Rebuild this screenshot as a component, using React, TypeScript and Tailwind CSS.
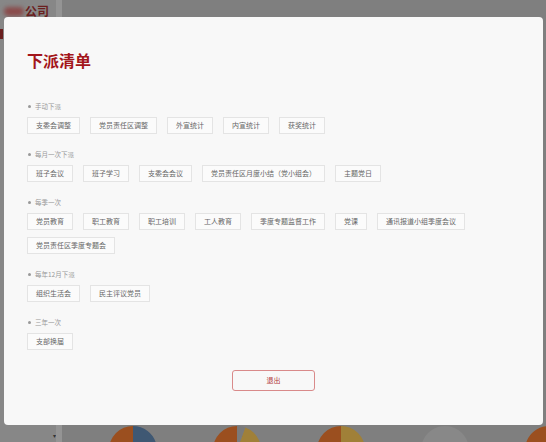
const sections = [
  { label: '手动下派', tags: ['支委会调整', '党员责任区调整', '外宣统计', '内宣统计', '获奖统计'] },
  {
    label: '每月一次下派',
    tags: ['班子会议', '班子学习', '支委会会议', '党员责任区月度小结（党小组会）', '主题党日'],
  },
  {
    label: '每季一次',
    tags: [
      '党员教育',
      '职工教育',
      '职工培训',
      '工人教育',
      '季度专题监督工作',
      '党课',
      '通讯报道小组季度会议',
      '党员责任区季度专题会',
    ],
  },
  { label: '每年12月下派', tags: ['组织生活会', '民主评议党员'] },
  { label: '三年一次', tags: ['支部换届'] },
]

type Slice = { color: string; from: number; to: number }

const pies: Slice[][] = [
  [
    { color: '#9b4f1f', from: 180, to: 360 },
    { color: '#3f5873', from: 0, to: 150 },
    { color: '#3c7a3c', from: 150, to: 180 },
  ],
  [
    { color: '#9b4f1f', from: 180, to: 360 },
    { color: '#a08038', from: 20, to: 110 },
    { color: '#3c7a3c', from: 110, to: 140 },
    { color: '#6c6c6c', from: 140, to: 180 },
    { color: '#7a7a7a', from: 0, to: 20 },
  ],
  [
    { color: '#9b4f1f', from: 180, to: 360 },
    { color: '#a08038', from: 0, to: 90 },
    { color: '#6c6c6c', from: 90, to: 180 },
  ],
  [{ color: '#888888', from: 0, to: 360 }],
  [{ color: '#9b4f1f', from: 0, to: 360 }],
]

function arc(cx: number, cy: number, r: number, from: number, to: number) {
  // angles in degrees, 0 = up, clockwise
  if (to - from >= 360) {
    return `M ${cx} ${cy - r} A ${r} ${r} 0 1 1 ${cx - 0.01} ${cy - r} Z`
  }
  const p = (a: number) => {
    const rad = ((a - 90) * Math.PI) / 180
    return [cx + r * Math.cos(rad), cy + r * Math.sin(rad)]
  }
  const [x1, y1] = p(from)
  const [x2, y2] = p(to)
  const large = to - from > 180 ? 1 : 0
  return `M ${cx} ${cy} L ${x1} ${y1} A ${r} ${r} 0 ${large} 1 ${x2} ${y2} Z`
}

function Pie({ slices }: { slices: Slice[] }) {
  return (
    <svg width="50" height="17" viewBox="0 0 50 17" className="shrink-0">
      {slices.map((s, i) => (
        <path key={i} d={arc(25, 25, 24, s.from, s.to)} fill={s.color} />
      ))}
    </svg>
  )
}

function Tag({ text }: { text: string }) {
  return (
    <span className="border border-[#e4e4e4] bg-[#fbfbfb] px-[8px] text-[7px] leading-[15px] text-[#666] whitespace-nowrap">
      {text}
    </span>
  )
}

export default function App() {
  return (
    <div
      className="relative flex h-[442px] w-[546px] overflow-hidden bg-[#7f7f7f]"
      style={{ fontFamily: '"Noto Sans CJK SC", "Noto Sans", sans-serif' }}
    >
      {/* page behind the overlay */}
      <aside className="flex w-[56px] shrink-0 flex-col bg-[#878787]">
        <div className="flex h-[22px] items-center whitespace-nowrap pl-[4px]">
          <span className="mr-[1px] h-[9px] w-[20px] shrink-0 rounded-full bg-[#8a4b4b] blur-[2px]" />
          <span className="text-[12px] font-bold leading-none text-[#6a1f1f]">公司</span>
        </div>
        <div className="mt-[7px] h-[10px] w-[3px] bg-[#6a1f1f]" />
        <div className="flex-1" />
        <div className="flex justify-end pb-[3px] text-[6px] leading-none text-[#333]">▾</div>
      </aside>
      <div className="w-[6px] shrink-0 bg-[#949494]" />
      <main className="flex min-w-0 flex-1 flex-col">
        <div className="mt-[425px] ml-[46px] flex gap-[54px]">
          {pies.map((p, i) => (
            <Pie key={i} slices={p} />
          ))}
        </div>
      </main>

      {/* dialog */}
      <div className="absolute left-[4px] top-[17px] flex h-[408px] w-[539px] flex-col rounded-[4px] bg-[#f8f8f8] px-[23px] pt-[33px]">
        <h1 className="text-[16px] font-bold leading-[20px] text-[#a3161b]">下派清单</h1>
        <div className="mt-[16px] flex flex-col">
          {sections.map((s) => (
            <section key={s.label} className="mt-[15px]">
              <div className="flex h-[10px] items-center gap-[4px] pl-[1px]">
                <span className="h-[3px] w-[3px] rounded-full bg-[#999]" />
                <span className="text-[6.5px] leading-[10px] text-[#999]">{s.label}</span>
              </div>
              <div className="mt-[6px] flex flex-wrap gap-x-[10px] gap-y-[7px]">
                {s.tags.map((t) => (
                  <Tag key={t} text={t} />
                ))}
              </div>
            </section>
          ))}
        </div>
        <div className="mt-[20px] flex justify-center">
          <button className="h-[21px] w-[83px] rounded-[3px] border border-[#d98a8a] text-[7px] text-[#b23a3a]">
            退出
          </button>
        </div>
      </div>
    </div>
  )
}
